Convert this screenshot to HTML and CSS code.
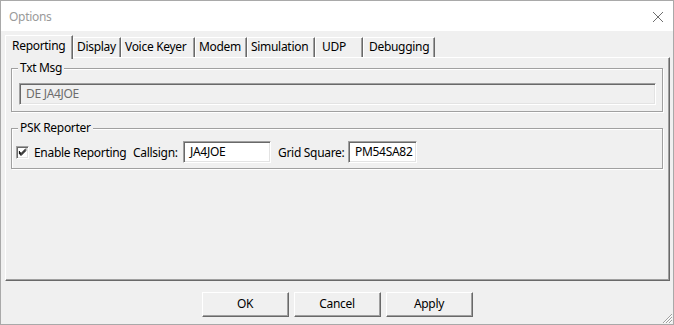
FILE: index.html
```html
<!DOCTYPE html>
<html lang="en">
<head>
  <meta charset="UTF-8">
  <meta name="viewport" content="width=device-width, initial-scale=1.0">
  <title>Options</title>
  <link rel="stylesheet" href="styles.css">
</head>
<body>
  <div class="window">
    <!-- Title bar -->
    <div class="titlebar">
      <span class="title">Options</span>
      <svg class="close" width="12" height="12" viewBox="0 0 12 12">
        <path d="M1 1 L11 11 M11 1 L1 11" stroke="#6f6f6f" stroke-width="1" fill="none"/>
      </svg>
    </div>

    <div class="client">
      <!-- Tabs -->
      <div class="tabs">
        <div class="tab active w-reporting">Reporting</div>
        <div class="tab w-display">Display</div>
        <div class="tab w-voice">Voice Keyer</div>
        <div class="tab w-modem">Modem</div>
        <div class="tab w-sim">Simulation</div>
        <div class="tab w-udp">UDP</div>
        <div class="tab w-debug">Debugging</div>
      </div>

      <div class="panel">
        <!-- Txt Msg group -->
        <fieldset class="group group-txt">
          <legend>Txt Msg</legend>
          <div class="textbox disabled">DE JA4JOE</div>
        </fieldset>

        <!-- PSK Reporter group -->
        <fieldset class="group group-psk">
          <legend>PSK Reporter</legend>
          <div class="row">
            <span class="checkbox">
              <svg width="11" height="11" viewBox="0 0 11 11">
                <path d="M2 5 L4 7.5 L9 2.5 M2 6 L4 8.5 L9 3.5 M2 4 L4 6.5 L9 1.5" stroke="#000" stroke-width="1" fill="none"/>
              </svg>
            </span>
            <span class="lbl lbl-enable">Enable Reporting</span>
            <span class="lbl lbl-call">Callsign:</span>
            <div class="textbox input-call">JA4JOE</div>
            <span class="lbl lbl-grid">Grid Square:</span>
            <div class="textbox input-grid">PM54SA82</div>
          </div>
        </fieldset>
      </div>

      <!-- Dialog buttons -->
      <div class="buttons">
        <div class="btn">OK</div>
        <div class="btn">Cancel</div>
        <div class="btn">Apply</div>
      </div>
    </div>

    <svg class="grip" width="12" height="12" viewBox="0 0 12 12">
      <path d="M11 2 L2 11 M11 5 L5 11 M11 8 L8 11" stroke="#a0a0a0" stroke-width="1" fill="none"/>
      <path d="M11 3 L3 11 M11 6 L6 11 M11 9 L9 11" stroke="#fff" stroke-width="1" fill="none"/>
    </svg>
  </div>
</body>
</html>
```

FILE: styles.css
```css
body {
  margin: 0;
  background-color: #f0f0f0;
  font-family: "Noto Sans", "Liberation Sans", sans-serif;
  font-size: 12px;
  letter-spacing: -0.3px;
  color: #000;
}
.window {
  position: relative;
  width: 674px;
  height: 325px;
  box-sizing: border-box;
  border: 1px solid #a9a9a9;
  display: flex;
  flex-direction: column;
  background-color: #f0f0f0;
}
/* Title bar */
.titlebar {
  height: 30px;
  background-color: #fff;
  display: flex;
  align-items: center;
  justify-content: space-between;
  padding: 0 9px 0 8px;
}
.title {
  color: #9a9a9a;
  font-size: 12px;
}
.close {
  margin-top: 1px;
}
.client {
  flex: 1;
  display: flex;
  flex-direction: column;
  padding: 4px 3px 0 4px;
}
/* Tabs */
.tabs {
  display: flex;
  align-items: flex-end;
  height: 22px;
}
.tab {
  box-sizing: border-box;
  height: 20px;
  line-height: 18px;
  padding-left: 3px;
  border-top: 1px solid #fff;
  border-left: 1px solid #fff;
  border-right: 1px solid #696969;
  box-shadow: inset -1px 0 0 #a0a0a0;
  white-space: nowrap;
}
.tab.active {
  position: relative;
  z-index: 1;
  height: 24px;
  margin-bottom: -2px;
  padding-left: 6px;
  line-height: 20px;
  background-color: #f0f0f0;
}
.w-reporting { width: 68px; }
.w-display { width: 48px; }
.w-voice { width: 74px; }
.w-modem { width: 52px; }
.w-sim { width: 68px; }
.w-udp { width: 48px; padding-left: 6px; }
.w-debug { width: 72px; padding-left: 5px; }
.panel {
  box-sizing: border-box;
  height: 224px;
  border-top: 1px solid #fff;
  border-left: 1px solid #fff;
  border-right: 1px solid #696969;
  border-bottom: 1px solid #696969;
  box-shadow: inset -1px -1px 0 #a0a0a0;
  padding: 0 6px 0 5px;
}
/* Group boxes */
.group {
  margin: 2px 0 0 0;
  border: 1px solid #a0a0a0;
  box-shadow: 1px 1px 0 #fff, inset 1px 1px 0 #fff;
  min-width: 0;
}
.group legend {
  line-height: 16px;
  padding: 0 2px;
  background-color: #f0f0f0;
}
.group-txt {
  padding: 7px 6px 6px 6px;
}
.group-psk {
  margin-top: 8px;
  padding: 5px 6px 5px 3px;
}
.group-psk legend {
  margin-left: 3px;
}
.textbox {
  box-sizing: border-box;
  height: 22px;
  line-height: 19px;
  padding-left: 6px;
  background-color: #fff;
  border: 1px solid;
  border-color: #a0a0a0 #fff #fff #a0a0a0;
  box-shadow: inset 1px 1px 0 #696969, inset -1px -1px 0 #e3e3e3;
  white-space: nowrap;
}
.textbox.disabled {
  margin-left: 1px;
  background-color: #f0f0f0;
  color: #6d6d6d;
}
.row {
  display: flex;
  align-items: center;
}
.checkbox {
  box-sizing: border-box;
  width: 13px;
  height: 13px;
  margin-left: 1px;
  margin-top: 1px;
  background-color: #fff;
  border: 1px solid;
  border-color: #a0a0a0 #fff #fff #a0a0a0;
  box-shadow: inset 1px 1px 0 #696969, inset -1px -1px 0 #e3e3e3;
  display: flex;
  align-items: center;
  justify-content: center;
}
.lbl {
  white-space: nowrap;
}
.lbl-enable { width: 99px; margin-left: 5px; }
.lbl-call { width: 50px; }
.input-call { width: 88px; }
.lbl-grid { width: 70px; margin-left: 7px; }
.input-grid { width: 69px; }
/* Dialog buttons */
.buttons {
  display: flex;
  justify-content: center;
  gap: 5px;
  margin-top: 11px;
  padding-right: 1px;
}
.btn {
  box-sizing: border-box;
  width: 87px;
  height: 25px;
  line-height: 22px;
  text-align: center;
  background-color: #f0f0f0;
  border: 1px solid;
  border-color: #fff #696969 #696969 #fff;
  box-shadow: inset -1px -1px 0 #a0a0a0;
}
.grip {
  position: absolute;
  right: 0;
  bottom: 0;
}
```
